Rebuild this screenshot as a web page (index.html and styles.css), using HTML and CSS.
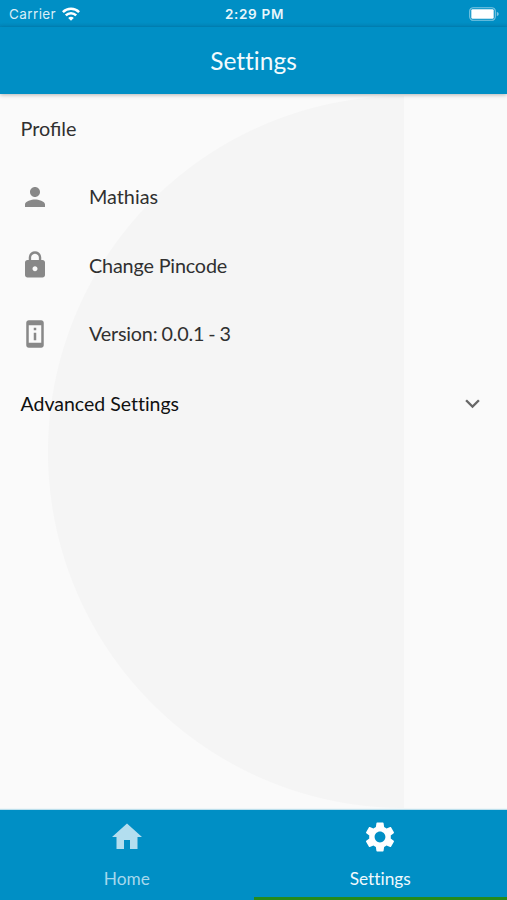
FILE: index.html
```html
<!DOCTYPE html>
<html lang="en">
<head>
<meta charset="utf-8">
<title>Settings</title>
<link rel="stylesheet" href="styles.css">
</head>
<body>
<div class="app">
  <div class="status">
    <div class="carrier"><span>Carrier</span>
      <svg class="wifi" viewBox="0 0 18 14"><g fill="none" stroke="#fff" stroke-width="2.5"><path d="M.9 5.2C5.4.7 12.6.7 17.1 5.2"/><path d="M3.8 8.3c2.9-2.9 7.5-2.9 10.4 0"/></g><path fill="#fff" d="M9 13.7 6.2 10.9c1.6-1.4 4-1.4 5.6 0z"/></svg>
    </div>
    <div class="time">2:29 PM</div>
    <div class="power">
      <svg class="battery" viewBox="0 0 31 14"><rect x=".7" y=".7" width="25.6" height="12.6" rx="3.6" fill="none" stroke="#fff" stroke-opacity=".5" stroke-width="1.1"/><rect x="2.3" y="2.3" width="22.4" height="9.4" rx="1.2" fill="#fff"/><path d="M27.8 4.8q2 .7 2 2.2t-2 2.2z" fill="#fff" fill-opacity=".5"/></svg>
    </div>
  </div>
  <header class="bar"><h1>Settings</h1></header>
  <main class="content">
    <h2 class="section">Profile</h2>
    <ul class="list">
      <li class="row"><svg class="icon" viewBox="0 0 24 24"><path d="M12 12c2.21 0 4-1.79 4-4s-1.79-4-4-4-4 1.79-4 4 1.79 4 4 4zm0 2c-2.67 0-8 1.34-8 4v2h16v-2c0-2.66-5.33-4-8-4z"/></svg><span>Mathias</span></li>
      <li class="row"><svg class="icon" viewBox="0 0 24 24"><path d="M18 8h-1V6c0-2.76-2.24-5-5-5S7 3.24 7 6v2H6c-1.100 0-2 .9-2 2v10c0 1.100.9 2 2 2h12c1.100 0 2-.9 2-2V10c0-1.100-.9-2-2-2zm-6 9c-1.100 0-2-.9-2-2s.9-2 2-2 2 .9 2 2-.9 2-2 2zm3.100-9H8.900V6c0-1.710 1.390-3.100 3.100-3.100s3.100 1.390 3.100 3.100v2z"/></svg><span class="pincode">Change Pincode</span></li>
      <li class="row"><svg class="icon" viewBox="0 0 24 24"><path d="M11 7h2v2h-2zm0 4h2v6h-2zM17 1.010 7 1c-1.100 0-2 .9-2 2v18c0 1.100.9 2 2 2h10c1.100 0 2-.9 2-2V3c0-1.100-.9-1.990-2-1.990zM17 19H7V5h10v14z"/></svg><span class="version">Version: 0.0.1 - 3</span></li>
    </ul>
    <div class="expander"><span>Advanced Settings</span><svg class="chevron" viewBox="0 0 24 24"><path d="M16.590 8.590 12 13.170 7.410 8.590 6 10l6 6 6-6z"/></svg></div>
  </main>
  <nav class="tabs">
    <a class="tab"><svg viewBox="0 0 24 24"><path d="M10 20v-6h4v6h5v-8h3L12 3 2 12h3v8z"/></svg><span>Home</span></a>
    <a class="tab active"><svg viewBox="0 0 24 24"><path d="M19.140 12.940c.04-.3.060-.61.060-.94 0-.32-.02-.64-.07-.94l2.030-1.580c.18-.14.230-.41.120-.61l-1.920-3.320c-.12-.22-.37-.29-.59-.22l-2.390.96c-.5-.38-1.030-.7-1.620-.94l-.36-2.540c-.04-.24-.24-.41-.48-.41h-3.840c-.24 0-.43.170-.47.410l-.36 2.540c-.59.240-1.130.570-1.620.940l-2.390-.96c-.22-.08-.47 0-.59.220L2.740 8.870c-.12.210-.08.470.120.610l2.030 1.580c-.05.3-.09.630-.09.940s.02.640.07.940l-2.030 1.580c-.18.140-.23.410-.12.610l1.920 3.320c.12.220.37.290.59.220l2.390-.96c.5.380 1.030.7 1.620.940l.36 2.540c.05.240.24.410.48.410h3.840c.24 0 .44-.17.470-.41l.36-2.540c.59-.24 1.130-.56 1.620-.94l2.390.96c.22.080.47 0 .59-.22l1.920-3.320c.12-.22.070-.47-.12-.61l-2.010-1.580zM12 15.600c-1.980 0-3.600-1.620-3.600-3.600s1.620-3.600 3.600-3.600 3.600 1.620 3.600 3.600-1.620 3.600-3.600 3.600z"/></svg><span>Settings</span></a>
  </nav>
</div>
</body>
</html>
```
FILE: styles.css
```css
* { box-sizing: border-box; }
body { margin: 0; font-family: Lato, sans-serif; color: #303030; }
h1, h2, ul { margin: 0; padding: 0; font-weight: 400; }
svg { display: block; flex: none; }
.app { width: 507px; height: 900px; display: flex; flex-direction: column; background: #fafafa; overflow: hidden; }
.status {
  height: 27px; flex: none; padding: 0 7px 0 9px;
  display: grid; grid-template-columns: 1fr auto 1fr; align-items: center;
  background: linear-gradient(#008fc5 22px, #0087bc);
  color: #fff; font-family: Inter, sans-serif; font-size: 13px;
}
.carrier { display: flex; align-items: center; gap: 6px; font-size: 13.5px; letter-spacing: .4px; color: #d9eef7; }
.wifi { width: 18px; height: 14px; }
.time { font-size: 13.5px; font-weight: 600; letter-spacing: .7px; color: #e9f6fb; }
.power { display: flex; justify-content: flex-end; }
.battery { width: 31px; height: 14px; }
.bar {
  height: 67px; flex: none; display: flex; align-items: center; justify-content: center;
  background: #008fc5; color: #f2fafd; box-shadow: 0 1px 4px rgba(0, 0, 0, .28);
  z-index: 1;
}
.bar h1 { font-size: 24.500px; line-height: 30px; font-variant-ligatures: none; }
.content {
  flex: 1; padding-top: 1px; font-size: 19.800px; line-height: 24px;
  background: radial-gradient(circle 356px at 404px 358px, #f5f5f5 355.500px, #fafafa 356.500px) 0 0 / 404px 100% no-repeat;
}
.section { height: 67.500px; padding: 21px 20.500px 0; font-size: inherit; }
.list { list-style: none; }
.row { height: 68.500px; display: flex; align-items: center; padding-left: 20px; gap: 39px; }
.row span { padding-bottom: 1px; }
.pincode { letter-spacing: -.16px; }
.version { letter-spacing: -.2px; word-spacing: -.8px; }
.icon { width: 30px; height: 30px; fill: #888; }
.expander { height: 70px; display: flex; align-items: center; justify-content: space-between; padding: 0 20px 0 20.500px; color: #101010; font-size: 19.500px; font-variant-ligatures: none; }
.chevron { width: 29px; height: 29px; fill: #686868; }
.expander span { padding-top: 1px; }
.tabs { height: 90px; flex: none; display: flex; background: #008fc5; box-shadow: 0 -1px 1px rgba(0, 143, 197, .25); }
.tab { flex: 1; display: flex; flex-direction: column; align-items: center; padding-top: 9px; gap: 13px; color: #a6d8ec; font-size: 17.300px; line-height: 22px; font-variant-ligatures: none; }
.tab svg { width: 36px; height: 36px; fill: #b3deef; }
.active { color: #f0f9fd; border-bottom: 3px solid #258a1c; }
.active svg { fill: #fff; }
```
